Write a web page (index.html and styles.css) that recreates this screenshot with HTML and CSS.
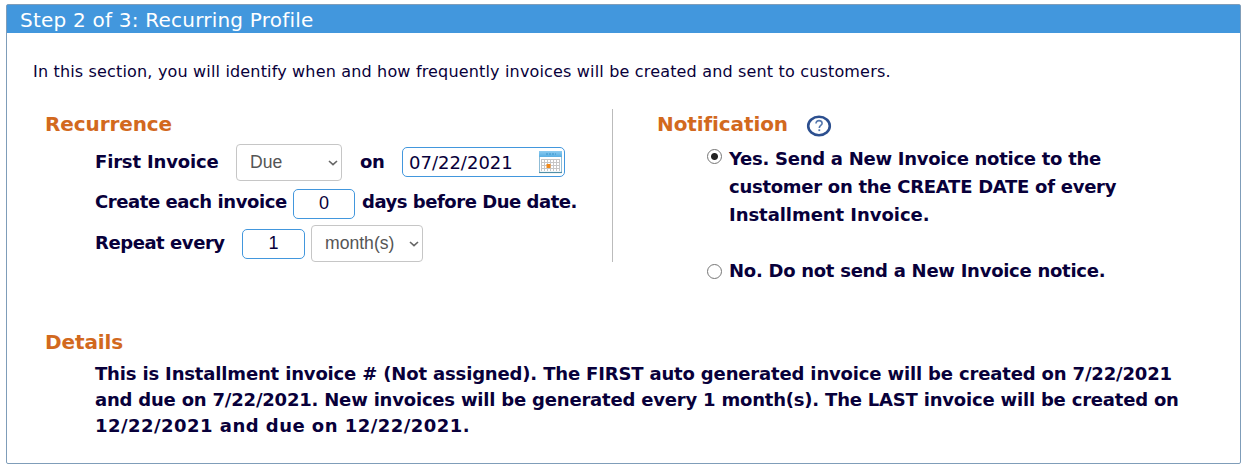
FILE: index.html
```html
<!DOCTYPE html>
<html lang="en">
<head>
    <meta charset="UTF-8">
    <meta name="viewport" content="width=device-width, initial-scale=1.0">
    <title>Recurring Profile</title>
    <link rel="stylesheet" href="styles.css">
</head>
<body>
    <div class="panel">
        <h1 class="panel-title">Step 2 of 3: Recurring Profile</h1>
        <p class="intro">In this section, you will identify when and how frequently invoices will be created and sent to customers.</p>

        <div class="columns">
            <!-- Recurrence -->
            <section class="recurrence">
                <h2>Recurrence</h2>
                <div class="row row-first">
                    <label class="lbl-first">First Invoice</label>
                    <div class="select select-due">
                        <span>Due</span>
                        <svg width="10" height="6" viewBox="0 0 10 6"><path d="M1 1l4 3.7L9 1" fill="none" stroke="#666" stroke-width="1.6"/></svg>
                    </div>
                    <label class="lbl-on">on</label>
                    <div class="date-field">
                        <span>07/22/2021</span>
                        <svg width="24" height="24" viewBox="0 0 24 24">
                            <defs>
                                <linearGradient id="calTop" x1="0" y1="0" x2="0" y2="1">
                                    <stop offset="0" stop-color="#8ccbf0"/>
                                    <stop offset="1" stop-color="#58aee2"/>
                                </linearGradient>
                            </defs>
                            <rect x="1.5" y="1.5" width="22" height="21" fill="#fff" stroke="#8fbcd6"/>
                            <path d="M1 22.5h23" stroke="#4f8fa8" stroke-width="1.2"/>
                            <rect x="1" y="1" width="23" height="6" fill="url(#calTop)"/>
                            <path d="M8 4h10" stroke="#3b93cb" stroke-dasharray="2 1"/>
                            <path d="M3 9.5h19M3 12.5h19M3 15.5h19M3 18.5h19M3.5 9v12M6.5 9v12M9.5 9v12M12.5 9v12M15.5 9v12M18.5 9v12M21.5 9v12" stroke="#c6c6c6" fill="none"/>
                            <rect x="8.5" y="14" width="4" height="4" fill="#f08a1c"/>
                        </svg>
                    </div>
                </div>
                <div class="row row-create">
                    <label class="lbl-create">Create each invoice</label>
                    <div class="num num-days">0</div>
                    <label class="lbl-days">days before Due date.</label>
                </div>
                <div class="row row-repeat">
                    <label class="lbl-repeat">Repeat every</label>
                    <div class="num num-repeat">1</div>
                    <div class="select select-month">
                        <span>month(s)</span>
                        <svg width="10" height="6" viewBox="0 0 10 6"><path d="M1 1l4 3.7L9 1" fill="none" stroke="#666" stroke-width="1.6"/></svg>
                    </div>
                </div>
            </section>

            <!-- Notification -->
            <section class="notification">
                <h2>
                    <span>Notification</span>
                    <svg class="help" width="26" height="22" viewBox="0 0 26 22">
                        <ellipse cx="13" cy="11" rx="10.8" ry="9.2" fill="#fff" stroke="#2c4f8f" stroke-width="2.6"/>
                        <path d="M10 8.6C10 6.6 11.3 5.6 13 5.6s3.1 1 3.1 2.7c0 2.2-2.8 2.2-2.8 4.6" fill="none" stroke="#5577ad" stroke-width="1.6"/>
                        <rect x="12.4" y="14.3" width="1.8" height="1.8" fill="#5577ad"/>
                    </svg>
                </h2>
                <div class="option">
                    <span class="radio checked"></span>
                    <p>Yes. Send a New Invoice notice to the<br>customer on the CREATE DATE of every<br><span class="yes-last">Installment Invoice.</span></p>
                </div>
                <div class="option">
                    <span class="radio"></span>
                    <p>No. Do not send a New Invoice notice.</p>
                </div>
            </section>
        </div>

        <!-- Details -->
        <section class="details">
            <h2>Details</h2>
            <p><span class="created">This is Installment invoice # (Not assigned). The FIRST auto generated invoice will be created on 7/22/2021</span><br>and due on 7/22/2021. New invoices will be generated every 1 month(s). The LAST invoice will be created on<br><span class="last-date">12/22/2021 and due on 12/22/2021.</span></p>
        </section>
    </div>
</body>
</html>
```
FILE: styles.css
```css
:root {
    --text: #08003a;
    --heading: #d2691e;
    --blue: #4297dd;
    --grey-border: #c6c6c6;
}

* {
    margin: 0;
    padding: 0;
    box-sizing: border-box;
}

body {
    background: #fff;
    color: var(--text);
    font-family: Verdana, 'DejaVu Sans', sans-serif;
    font-size: 18px;
    white-space: nowrap;
}

.panel {
    width: 1235px;
    height: 460px;
    margin: 4px 0 0 6px;
    border: 1px solid #7f9db9;
    border-radius: 2px;
}

.panel-title {
    height: 28px;
    padding-left: 13px;
    background: var(--blue);
    color: #fff;
    font-size: 20px;
    font-weight: normal;
    letter-spacing: 0.22px;
    line-height: 31px;
}

.intro {
    margin-top: 27px;
    padding-left: 26px;
    font-size: 16px;
    letter-spacing: 0.168px;
    line-height: 24px;
}

h2 {
    color: var(--heading);
    font-size: 20px;
    letter-spacing: -0.1px;
    line-height: 30px;
}

.columns {
    display: flex;
    margin-top: 25px;
    padding-left: 38px;
    height: 218px;
}

/* Recurrence */
.recurrence {
    width: 568px;
    height: 153px;
    border-right: 1px solid #bbb;
}

.row {
    display: flex;
    align-items: center;
    padding-left: 50px;
    font-weight: bold;
}

.row-first {
    height: 37px;
    margin-top: 5px;
}

.row-create {
    height: 30px;
    margin-top: 8px;
}

.row-repeat {
    height: 37px;
    margin-top: 6px;
}

.row label {
    line-height: 26px;
    margin-top: -1px;
}

.row .lbl-first {
    width: 141px;
    letter-spacing: -0.16px;
}

.row .lbl-repeat {
    width: 147px;
    letter-spacing: -0.44px;
}

.row .lbl-on {
    width: 60px;
    padding-left: 18px;
    letter-spacing: -0.3px;
}

.row .lbl-create {
    width: 198px;
    margin-top: -5px;
    letter-spacing: -0.42px;
}

.row .lbl-days {
    margin-top: -5px;
    padding-left: 7px;
    letter-spacing: -0.47px;
}

.select {
    display: flex;
    align-items: center;
    justify-content: space-between;
    height: 37px;
    padding: 0 3px 0 13px;
    border: 1px solid var(--grey-border);
    border-radius: 4px;
    color: #555;
    font: 17.6px 'Liberation Sans', Arial, sans-serif;
}

.select-due {
    width: 106px;
}

.select-month {
    width: 112px;
    margin-left: 6px;
}

.num,
.date-field {
    height: 30px;
    border: 1px solid var(--blue);
    border-radius: 5px;
    font-weight: normal;
}

.num {
    width: 62px;
    font-family: 'Liberation Sans', Arial, sans-serif;
    line-height: 27px;
    text-align: center;
}

.num-repeat {
    width: 63px;
}

.date-field {
    display: flex;
    align-items: center;
    justify-content: space-between;
    width: 163px;
    margin-top: -1px;
    padding: 0 2px 0 6px;
}

/* Notification */
.notification {
    padding-left: 44px;
}

.notification h2 {
    display: flex;
    align-items: center;
}

.help {
    margin: 4px 0 0 18px;
}

.option {
    display: flex;
    padding-left: 50px;
    margin-top: 6px;
    font-weight: bold;
    letter-spacing: -0.27px;
    line-height: 28px;
}

.option + .option {
    margin-top: 28px;
}

.radio {
    width: 15px;
    height: 15px;
    margin: 7px 7px 0 0;
    border: 1px solid #767676;
    border-radius: 50%;
}

.radio.checked {
    margin-top: 4px;
    background: radial-gradient(circle, #222 3px, #fff 4px);
}

.yes-last {
    letter-spacing: -0.05px;
}

/* Details */
.details {
    padding-left: 38px;
}

.details p {
    padding-left: 50px;
    margin-top: 4px;
    font-weight: bold;
    letter-spacing: -0.2px;
    line-height: 26px;
}

.created {
    letter-spacing: -0.16px;
}

.last-date {
    letter-spacing: 0.47px;
}
```
